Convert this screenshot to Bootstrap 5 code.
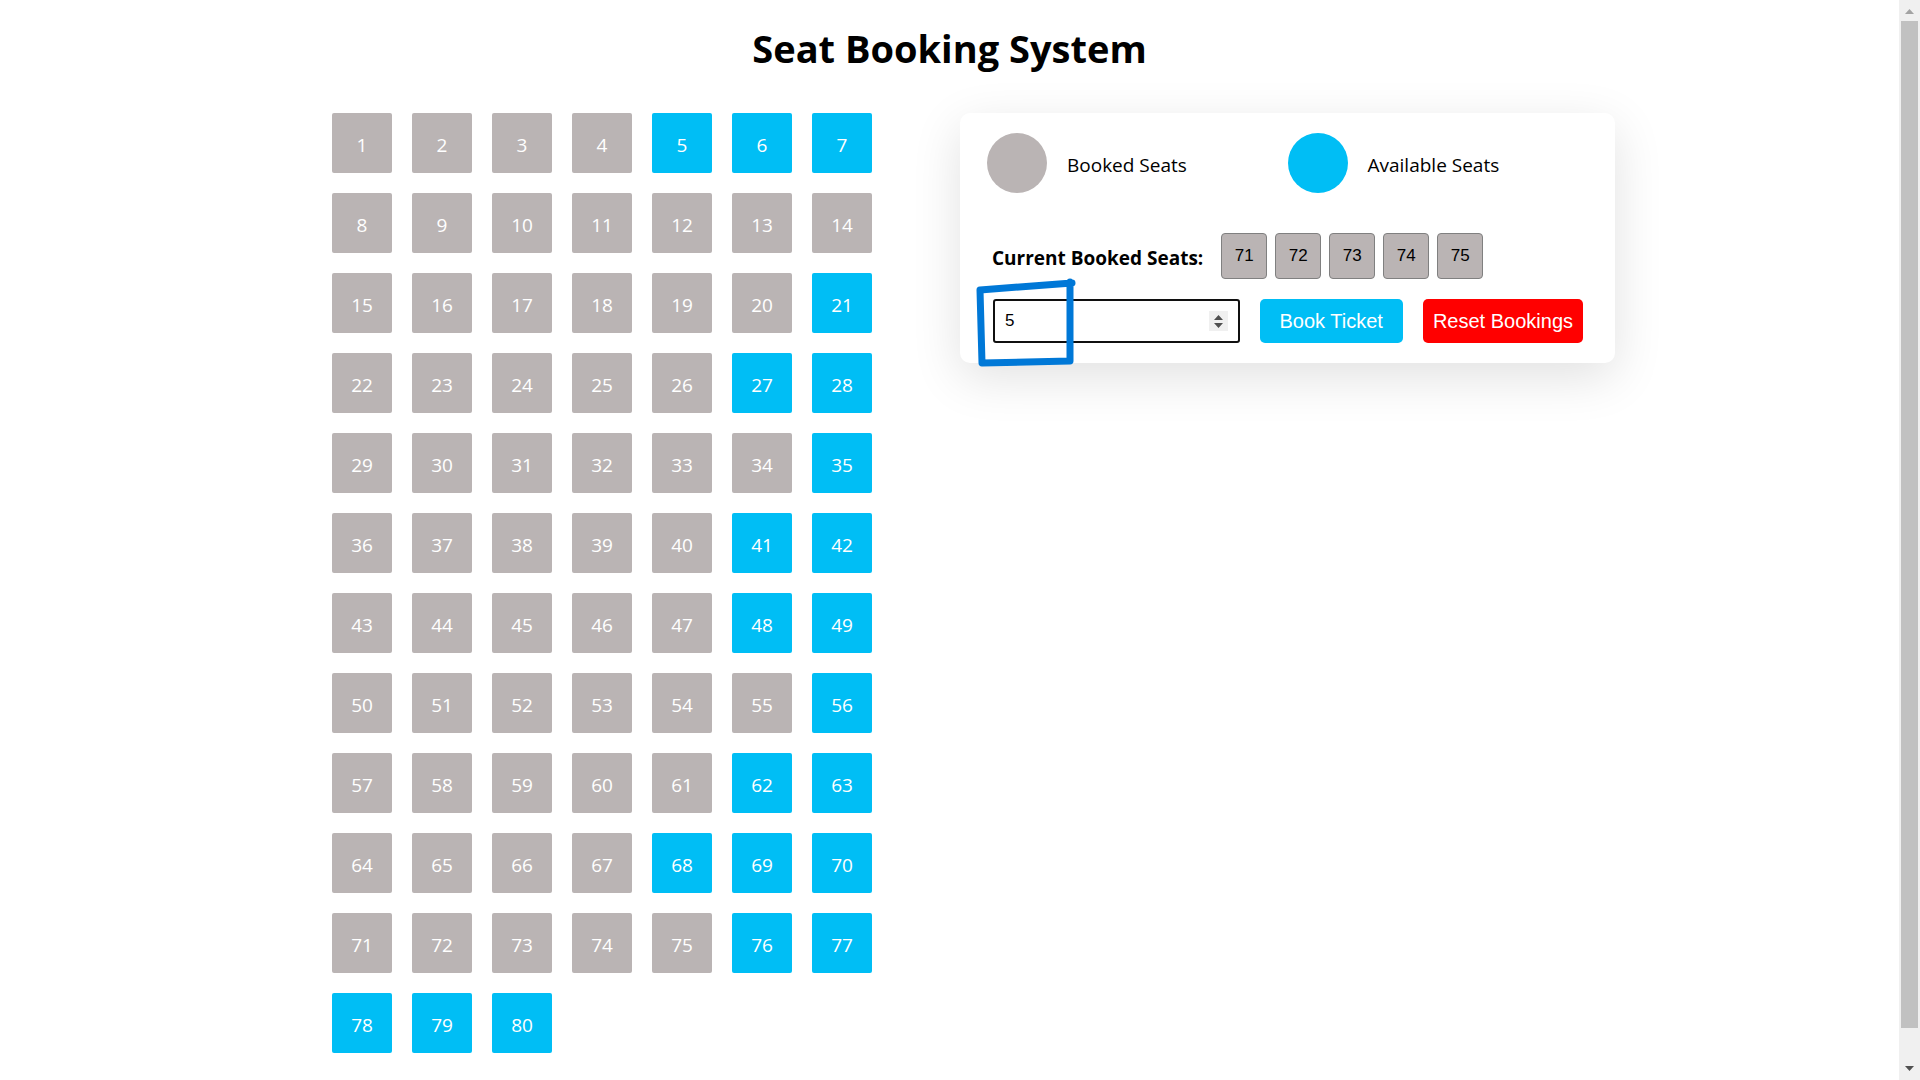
<!DOCTYPE html>
<html lang="en">
<head>
<meta charset="utf-8">
<meta name="viewport" content="width=device-width, initial-scale=1">
<title>Seat Booking System</title>
<link href="https://cdn.jsdelivr.net/npm/bootstrap@5.3.0/dist/css/bootstrap.min.css" rel="stylesheet">
<style>
  :root { --booked: #bab4b4; --free: #00bef5; }
  body { font-family: "Open Sans", "Noto Sans", sans-serif; color: #000; background: #fff; }
  .page-title { font-size: 38px; line-height: 60px; padding: 18px 0 35px; }
  .booking { max-width: 1331px; gap: 88px; }
  .seat-grid { display: grid; grid-template-columns: repeat(7, 60px); gap: 20px; }
  .seat { height: 60px; border: 0; border-radius: 2px; padding: 3px 0 0; font-size: 19px; line-height: 24px; color: #fff; background: var(--free); }
  .seat.taken { background: var(--booked); }
  .panel { border-radius: 10px; padding: 20px 27px; box-shadow: 0 14px 50px rgba(0, 0, 0, .12); }
  .legend { gap: 20px; font-size: 19px; line-height: 24px; padding-bottom: 40px; }
  .legend-text { padding-top: 4px; }
  .dot { width: 60px; height: 60px; background: var(--booked); }
  .dot.free { background: var(--free); }
  .current { gap: 18px; padding: 0 0 20px 5px; }
  .current-title { font-size: 19px; line-height: 24px; padding-top: 4px; }
  .chip { width: 46px; height: 46px; font: 17px/20px "Liberation Sans", sans-serif; border: 1px solid #808080; border-radius: 4px; background: var(--booked); padding: 12px 0; text-align: center; }
  .booking-form { gap: 20px; padding: 0 5px 0 6px; font-family: "Liberation Sans", sans-serif; }
  .seat-count { min-width: 0; height: 44px; border: 2px solid #101010; border-radius: 3px; padding: 0 10px; font-size: 17px; color: #000; outline: 0; }
  .seat-count::-webkit-inner-spin-button {
    -webkit-appearance: none; opacity: 1; width: 19px; height: 20px;
    background: #f0f0f0 url("data:image/svg+xml,%3Csvg xmlns='http://www.w3.org/2000/svg' width='19' height='20'%3E%3Cpath d='M5 9h9L9.500 4zM5 12h9L9.500 17z' fill='%23505050'/%3E%3C/svg%3E") no-repeat;
  }
  .action { height: 44px; border: 0; border-radius: 5px; padding: 0 20px; font-size: 20px; line-height: 24px; color: #fff; background: var(--free); }
  .action.reset { background: #f00; padding: 0 10px; }
  .pen { left: -16px; top: -22px; width: 106px; height: 92px; pointer-events: none; }
  .scroller { width: 21px; background: #f0f0f0; }
  .thumb { width: 17px; background: #c1c1c1; margin-bottom: 52px; }
</style>
</head>
<body class="d-flex">
<main class="flex-fill">
  <h1 class="page-title text-center fw-bold m-0">Seat Booking System</h1>
  <div class="booking d-flex align-items-start mx-auto ps-5">
    <div class="seat-grid" id="seats"></div>
    <section class="panel bg-white flex-fill">
      <div class="row g-0">
        <div class="col-6 legend d-flex align-items-center"><span class="dot rounded-circle"></span><span class="legend-text">Booked Seats</span></div>
        <div class="col-6 legend d-flex align-items-center"><span class="dot free rounded-circle"></span><span class="legend-text">Available Seats</span></div>
      </div>
      <div class="current d-flex align-items-center">
        <h2 class="current-title fw-bold m-0">Current Booked Seats:</h2>
        <div class="d-flex gap-2">
          <span class="chip">71</span><span class="chip">72</span><span class="chip">73</span><span class="chip">74</span><span class="chip">75</span>
        </div>
      </div>
      <form class="booking-form d-flex position-relative">
        <input class="seat-count flex-fill" type="number" value="5" min="1" max="7" aria-label="Number of seats">
        <button class="action" type="button">Book Ticket</button>
        <button class="action reset" type="button">Reset Bookings</button>
        <svg class="pen position-absolute" viewBox="0 0 106 92" fill="none" stroke="#0078d7" stroke-width="7" stroke-linecap="round" stroke-linejoin="round" aria-hidden="true">
          <path d="M101 6 9 13 11 86 99 84V5"/>
        </svg>
      </form>
    </section>
  </div>
</main>
<div class="scroller vh-100 sticky-top d-flex flex-column align-items-center flex-shrink-0" aria-hidden="true">
  <svg width="21" height="21" class="flex-shrink-0"><path d="M6 14h9L10.500 9z" fill="#a3a3a3"/></svg>
  <div class="thumb flex-fill"></div>
  <svg width="21" height="21" class="position-absolute bottom-0"><path d="M6 7h9L10.500 12z" fill="#505050"/></svg>
</div>
<script>
  const free = new Set([5, 6, 7, 21, 27, 28, 35, 41, 42, 48, 49, 56, 62, 63, 68, 69, 70, 76, 77, 78, 79, 80]);
  const grid = document.getElementById('seats');
  for (let n = 1; n <= 80; n++) {
    const seat = document.createElement('button');
    seat.type = 'button';
    seat.className = free.has(n) ? 'seat' : 'seat taken';
    seat.textContent = n;
    grid.append(seat);
  }
</script>
<script src="https://cdn.jsdelivr.net/npm/bootstrap@5.3.0/dist/js/bootstrap.bundle.min.js"></script>
</body>
</html>
